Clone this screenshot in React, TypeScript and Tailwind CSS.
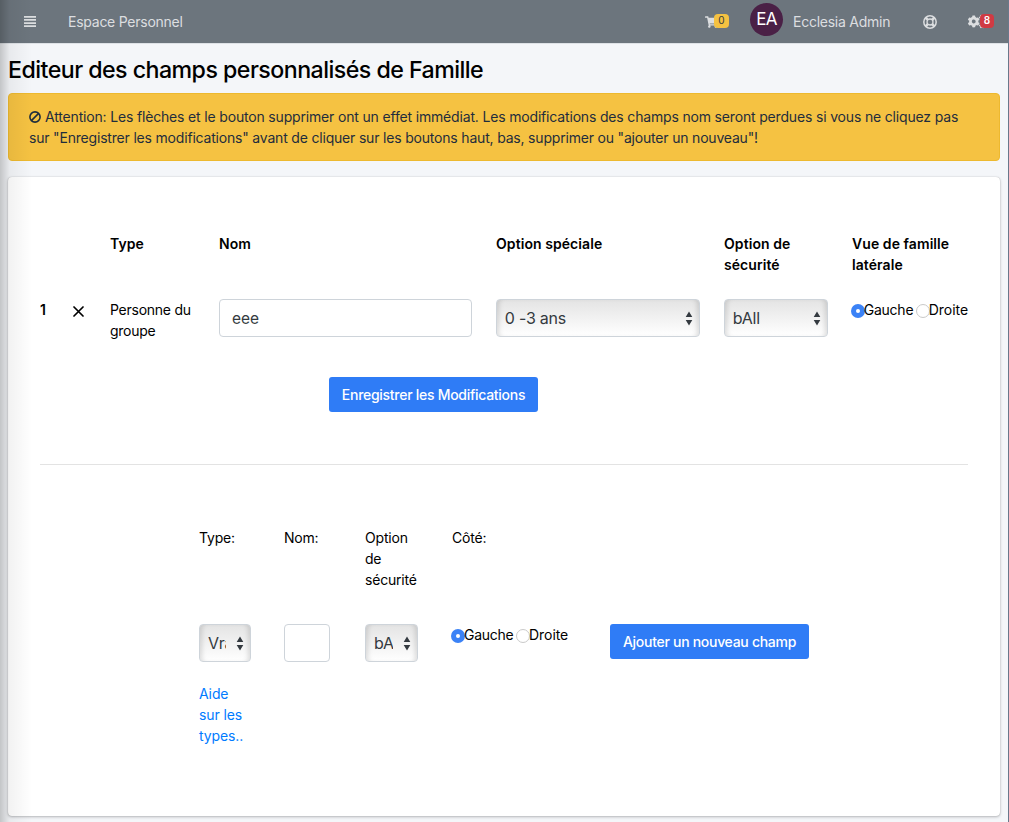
import type { ReactNode } from "react";
import { FaAlignJustify, FaCogs, FaRegLifeRing, FaShoppingCart } from "react-icons/fa";

function Radio({ checked = false }: { checked?: boolean }) {
  return (
    <span
      className={
        checked
          ? "mt-[5px] flex h-[14px] w-[14px] shrink-0 items-center justify-center rounded-full bg-[#3b82f6]"
          : "mt-[5px] h-[14px] w-[14px] shrink-0 rounded-full border border-[#c9c9c9] bg-white"
      }
    >
      {checked && <span className="h-[4px] w-[4px] rounded-full bg-white" />}
    </span>
  );
}

function SideChoice() {
  return (
    <div className="flex whitespace-nowrap">
      <Radio checked />
      <span className="-ml-[1px] w-[52px] tracking-[-0.25px]">Gauche</span>
      <Radio />
      <span className="-ml-[1px] tracking-[-0.05px]">Droite</span>
    </div>
  );
}

function Select({ width, children }: { width: string; children: ReactNode }) {
  return (
    <div
      className={`${width} flex h-[38px] items-center rounded border border-[#ced4da] bg-gradient-to-b from-[#e4e4e4] to-white pl-2 pr-[6px] text-[16px] text-[#343a40] shadow-[inset_5px_0_5px_-3px_rgba(0,0,0,0.13),inset_-5px_0_5px_-3px_rgba(0,0,0,0.13)]`}
    >
      <span className="min-w-0 flex-1 overflow-hidden whitespace-nowrap tracking-[-0.25px]">{children}</span>
      <svg className="ml-[10px] h-[15px] w-[8px] shrink-0" viewBox="0 0 8 15" fill="#343a40">
        <path d="M4 .5 7.3 6H.7zM4 14.5.7 9h6.6z" />
      </svg>
    </div>
  );
}

export default function App() {
  return (
    <div className="relative flex h-[822px] w-[1009px] overflow-hidden bg-[#f4f6f9] font-[Inter,sans-serif] text-[14px] leading-[21px] text-black">
      <div className="w-[1008px] shrink-0">
        <header className="flex h-[44px] items-center border-b border-[#dee2e6] bg-[#6c757d] text-[#dcdee0]">
          <svg className="ml-[24px] h-[11px] w-[12px]" viewBox="0 0 12 11" fill="currentColor">
            <path d="M0 0h12v1.7H0zM0 3.1h12v1.7H0zM0 6.2h12v1.7H0zM0 9.3h12V11H0z" />
          </svg>
          <span className="ml-[32px] w-[637px] tracking-[-0.25px]">Espace Personnel</span>
          <div className="flex w-[45px] items-center">
            <FaShoppingCart className="h-[12px] w-[13px]" />
            <span className="z-10 -ml-[4px] mb-[2px] flex h-[14px] w-[15px] items-center justify-center rounded bg-[#f5c242] text-[10px] text-[#343a40]">
              0
            </span>
          </div>
          <span className="mb-[5px] flex h-[33px] w-[33px] items-center justify-center rounded-full bg-[#4a2046] text-[17px] tracking-[-0.8px] text-white">
            EA
          </span>
          <span className="ml-[10px] w-[130px] tracking-[-0.25px]">Ecclesia Admin</span>
          <svg className="h-[14px] w-[14px]" viewBox="0 0 14 14" fill="none" stroke="currentColor">
            <circle cx="7" cy="7" r="6.2" strokeWidth="1.5" />
            <circle cx="7" cy="7" r="3" strokeWidth="1.3" />
            <path d="m2.7 2.7 2.1 2.1m4.4 4.4 2.1 2.1m0-8.6L9.2 4.8M4.8 9.2l-2.1 2.1" strokeWidth="2.6" />
          </svg>
          <FaCogs className="ml-[31px] h-[15px] w-[17px]" />
          <span className="z-10 -ml-[5px] mb-[2px] flex h-[14px] w-[14px] items-center justify-center rounded bg-[#d03a43] text-[10px] font-semibold text-white">
            8
          </span>
        </header>
        <main className="px-2">
          <h1 className="h-[49px] pt-[11px] text-[23.2px] font-medium leading-[30px] tracking-[-0.54px]">
            Editeur des champs personnalisés de Famille
          </h1>
          <div className="h-[68px] w-[992px] rounded border border-[#edb92f] bg-[#f5c242] pl-[20px] pt-[12px] text-[#1f2d3d]">
            <div className="whitespace-nowrap">
              <svg className="mr-[4px] inline h-[12px] w-[12px] align-[-1px]" viewBox="0 0 12 12" fill="none" stroke="currentColor" strokeWidth="1.6">
                <circle cx="6" cy="6" r="5.1" />
                <path d="m2.4 9.6 7.2-7.2" />
              </svg>
              <span className="tracking-[-0.17px]">
                Attention: Les flèches et le bouton supprimer ont un effet immédiat. Les modifications des champs nom seront perdues si vous ne cliquez pas
              </span>
            </div>
            <div className="whitespace-nowrap tracking-[-0.19px]">
              sur "Enregistrer les modifications" avant de cliquer sur les boutons haut, bas, supprimer ou "ajouter un nouveau"!
            </div>
          </div>
          <section className="mt-[16px] h-[639px] w-[992px] rounded bg-white px-[32px] shadow-[0_0_1px_rgba(0,0,0,0.25),0_1px_3px_rgba(0,0,0,0.25)]">
            <div className="flex h-[122px] pt-[56px] font-semibold tracking-[0.07px]">
              <div className="w-[70px]" />
              <div className="w-[109px]">Type</div>
              <div className="w-[277px]">Nom</div>
              <div className="w-[228px]">Option spéciale</div>
              <div className="w-[128px] pr-[50px]">Option de sécurité</div>
              <div className="w-[110px]">Vue de famille latérale</div>
            </div>
            <div className="flex h-[78px]">
              <div className="w-[33px] font-semibold">1</div>
              <div className="w-[37px] pt-[7px]">
                <svg className="h-[11px] w-[11px]" viewBox="0 0 11 11" stroke="black" strokeWidth="1.7" strokeLinecap="round">
                  <path d="m1 1 9 9M10 1 1 10" />
                </svg>
              </div>
              <div className="w-[109px] pr-[20px] tracking-[-0.25px]">Personne du groupe</div>
              <div className="w-[277px]">
                <div className="flex h-[38px] w-[253px] items-center rounded border border-[#ced4da] pl-[12px] text-[15.5px] text-[#343a40]">
                  eee
                </div>
              </div>
              <div className="w-[228px]">
                <Select width="w-[204px]">0 -3 ans</Select>
              </div>
              <div className="w-[127px]">
                <Select width="w-[104px]">bAll</Select>
              </div>
              <SideChoice />
            </div>
            <button className="ml-[289px] block h-[35px] w-[209px] whitespace-nowrap rounded-[3px] bg-[#2f7cf6] font-medium tracking-[-0.28px] text-white">
              Enregistrer les Modifications
            </button>
            <div className="mt-[52px] border-t border-[#e3e3e3]" />
            <div className="ml-[159px] flex h-[160px] pt-[62px] tracking-[-0.2px]">
              <div className="w-[85px]">Type:</div>
              <div className="w-[81px]">Nom:</div>
              <div className="w-[87px] pr-[30px]">Option de sécurité</div>
              <div>Côté:</div>
            </div>
            <div className="-mt-px ml-[159px] flex h-[60px]">
              <div className="w-[85px]">
                <Select width="w-[52px]">Vrai</Select>
              </div>
              <div className="w-[81px]">
                <div className="h-[38px] w-[46px] rounded border border-[#ced4da]" />
              </div>
              <div className="w-[86px]">
                <Select width="w-[53px]">bA</Select>
              </div>
              <div className="w-[159px]">
                <SideChoice />
              </div>
              <button className="h-[35px] w-[199px] whitespace-nowrap rounded-[3px] bg-[#2f7cf6] font-medium tracking-[-0.29px] text-white">
                Ajouter un nouveau champ
              </button>
            </div>
            <div className="-mt-px ml-[159px] w-[50px] tracking-[-0.12px] text-[#007bff]">Aide sur les types..</div>
          </section>
        </main>
      </div>
      <div className="w-px bg-[#69788b]" />
      <div className="pointer-events-none absolute inset-y-0 left-0 w-[32px] bg-gradient-to-r from-black/20 via-black/5 via-30% to-transparent" />
    </div>
  );
}
